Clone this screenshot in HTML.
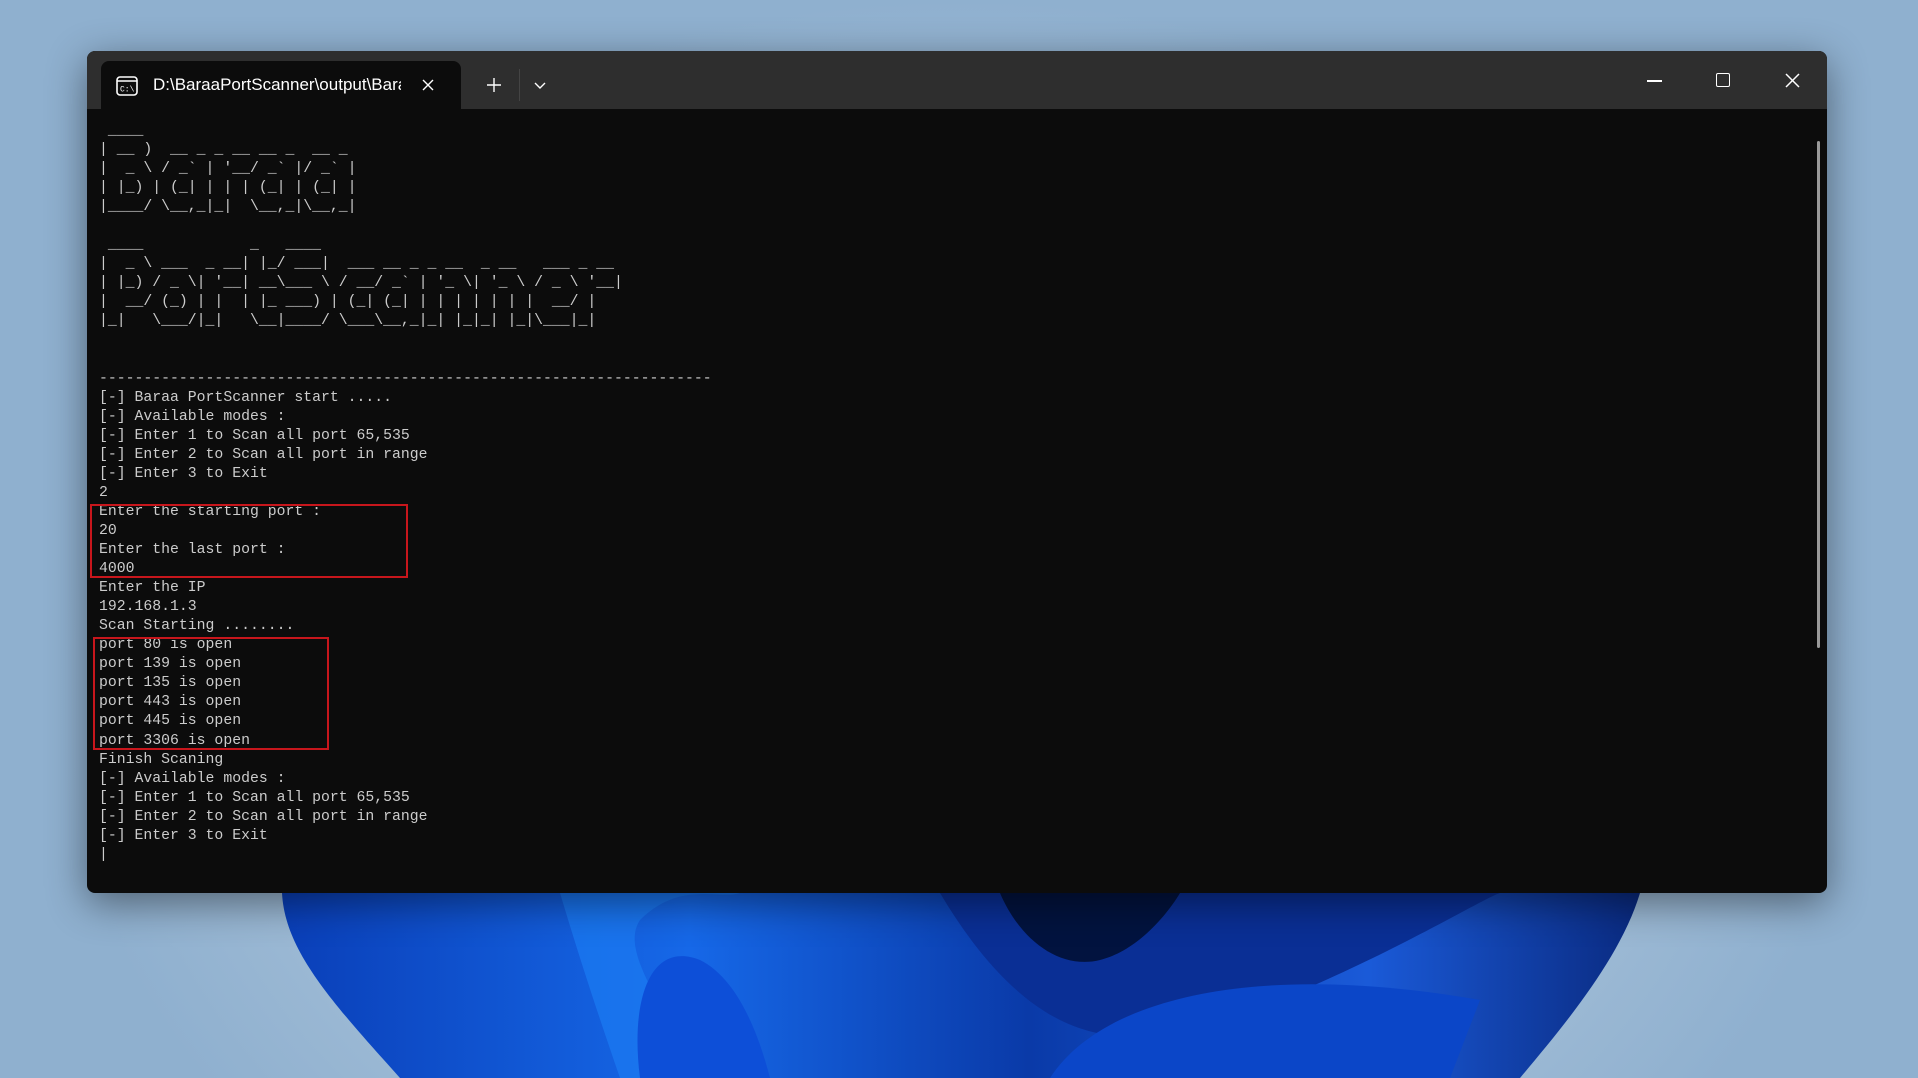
<!DOCTYPE html>
<html><head><meta charset="utf-8"><style>
html,body{margin:0;padding:0}
body{width:1918px;height:1078px;overflow:hidden;position:relative;
background:radial-gradient(ellipse 900px 700px at 960px 700px,#c4d6e6 0%,#aac3da 55%,#8fb0cf 100%);}
.win{position:absolute;left:87px;top:51px;width:1740px;height:842px;border-radius:8px;overflow:hidden;background:#0c0c0c;box-shadow:0 10px 40px rgba(0,0,0,.45)}
.title{position:absolute;left:0;top:0;width:100%;height:58px;background:#2e2e2e}
.tab{position:absolute;left:14px;top:10px;width:360px;height:48px;background:#0c0c0c;border-radius:8px 8px 0 0}
.tabtxt{position:absolute;left:52px;top:14px;font:17px "Liberation Sans",sans-serif;color:#fff;white-space:nowrap;width:248px;overflow:hidden}
pre{position:absolute;left:12px;top:71px;margin:0;font:14.8px/19.04px "Liberation Mono",monospace;color:#cccccc}
.box{position:absolute;border:2px solid #c8161c}
</style></head><body>
<svg style="position:absolute;left:0;top:880px" width="1918" height="198" viewBox="0 880 1918 198">
<defs><linearGradient id="g1" x1="0" y1="0" x2="1" y2="0"><stop offset="0" stop-color="#0a3fb8"/><stop offset=".3" stop-color="#1668e8"/><stop offset=".55" stop-color="#0a3aa8"/><stop offset=".8" stop-color="#1a5ad8"/><stop offset="1" stop-color="#0a2a80"/></linearGradient></defs>
<path d="M282 893 L1640 893 C1620 960 1560 1030 1520 1078 L400 1078 C330 1000 285 950 282 893Z" fill="url(#g1)"/>
<path d="M560 893 C580 960 600 1020 620 1078 L700 1078 C660 1000 620 950 640 920 C680 880 720 900 740 893Z" fill="#1a78f0" opacity=".8"/>
<path d="M940 893 C980 960 1020 1000 1060 1020 C1120 1050 1200 1040 1280 1000 C1400 950 1480 900 1500 893Z" fill="#0a2f95"/>
<path d="M1000 893 C1020 940 1060 970 1100 960 C1140 950 1170 910 1180 893Z" fill="#02133f"/>
<path d="M1050 1078 C1100 1000 1250 960 1480 1000 L1450 1078Z" fill="#0b46c8"/>
<path d="M640 1078 C630 1000 650 940 700 960 C740 980 760 1040 770 1078Z" fill="#0d4fd8"/>
</svg>
<div class="win">
 <div class="title">
  <div class="tab">
   <svg style="position:absolute;left:15px;top:15px" width="22" height="20" viewBox="0 0 22 20"><rect x="1" y="1" width="20" height="18" rx="3" fill="none" stroke="#fff" stroke-width="1.6"/><line x1="1" y1="5" x2="21" y2="5" stroke="#fff" stroke-width="1.4"/><text x="4" y="15.5" font-family="Liberation Mono,monospace" font-size="8" fill="#fff">C:\</text></svg>
   <div class="tabtxt">D:\BaraaPortScanner\output\BaraaPortScanner.exe</div>
   <svg style="position:absolute;left:321px;top:18px" width="12" height="12"><path d="M1 1L11 11M11 1L1 11" stroke="#fff" stroke-width="1.4"/></svg>
  </div>
  <svg style="position:absolute;left:400px;top:27px" width="14" height="14"><path d="M7 0V14M0 7H14" stroke="#fff" stroke-width="1.4"/></svg>
  <div style="position:absolute;left:432px;top:18px;width:1px;height:32px;background:#444"></div>
  <svg style="position:absolute;left:447px;top:31px" width="12" height="8"><path d="M1 1L6 6L11 1" stroke="#fff" stroke-width="1.4" fill="none"/></svg>
  <div style="position:absolute;left:1560px;top:29px;width:15px;height:1.5px;background:#fff"></div>
  <div style="position:absolute;left:1629px;top:22px;width:12px;height:12px;border:1.5px solid #fff;border-radius:2px"></div>
  <svg style="position:absolute;left:1698px;top:22px" width="15" height="15"><path d="M1 1L14 14M14 1L1 14" stroke="#fff" stroke-width="1.5"/></svg>
 </div>
 <div style="position:absolute;left:1730px;top:90px;width:3px;height:507px;background:#9a9a9a;border-radius:2px"></div>
<pre> ____
| __ )  __ _ _ __ __ _  __ _
|  _ \ / _` | '__/ _` |/ _` |
| |_) | (_| | | | (_| | (_| |
|____/ \__,_|_|  \__,_|\__,_|

 ____            _   ____
|  _ \ ___  _ __| |_/ ___|  ___ __ _ _ __  _ __   ___ _ __
| |_) / _ \| '__| __\___ \ / __/ _` | '_ \| '_ \ / _ \ '__|
|  __/ (_) | |  | |_ ___) | (_| (_| | | | | | | |  __/ |
|_|   \___/|_|   \__|____/ \___\__,_|_| |_|_| |_|\___|_|


---------------------------------------------------------------------
[-] Baraa PortScanner start .....
[-] Available modes :
[-] Enter 1 to Scan all port 65,535
[-] Enter 2 to Scan all port in range
[-] Enter 3 to Exit
2
Enter the starting port :
20
Enter the last port :
4000
Enter the IP
192.168.1.3
Scan Starting ........
port 80 is open
port 139 is open
port 135 is open
port 443 is open
port 445 is open
port 3306 is open
Finish Scaning
[-] Available modes :
[-] Enter 1 to Scan all port 65,535
[-] Enter 2 to Scan all port in range
[-] Enter 3 to Exit
|</pre>
 <div class="box" style="left:3px;top:453px;width:314px;height:70px"></div>
 <div class="box" style="left:6px;top:586px;width:232px;height:109px"></div>
</div>
</body></html>
